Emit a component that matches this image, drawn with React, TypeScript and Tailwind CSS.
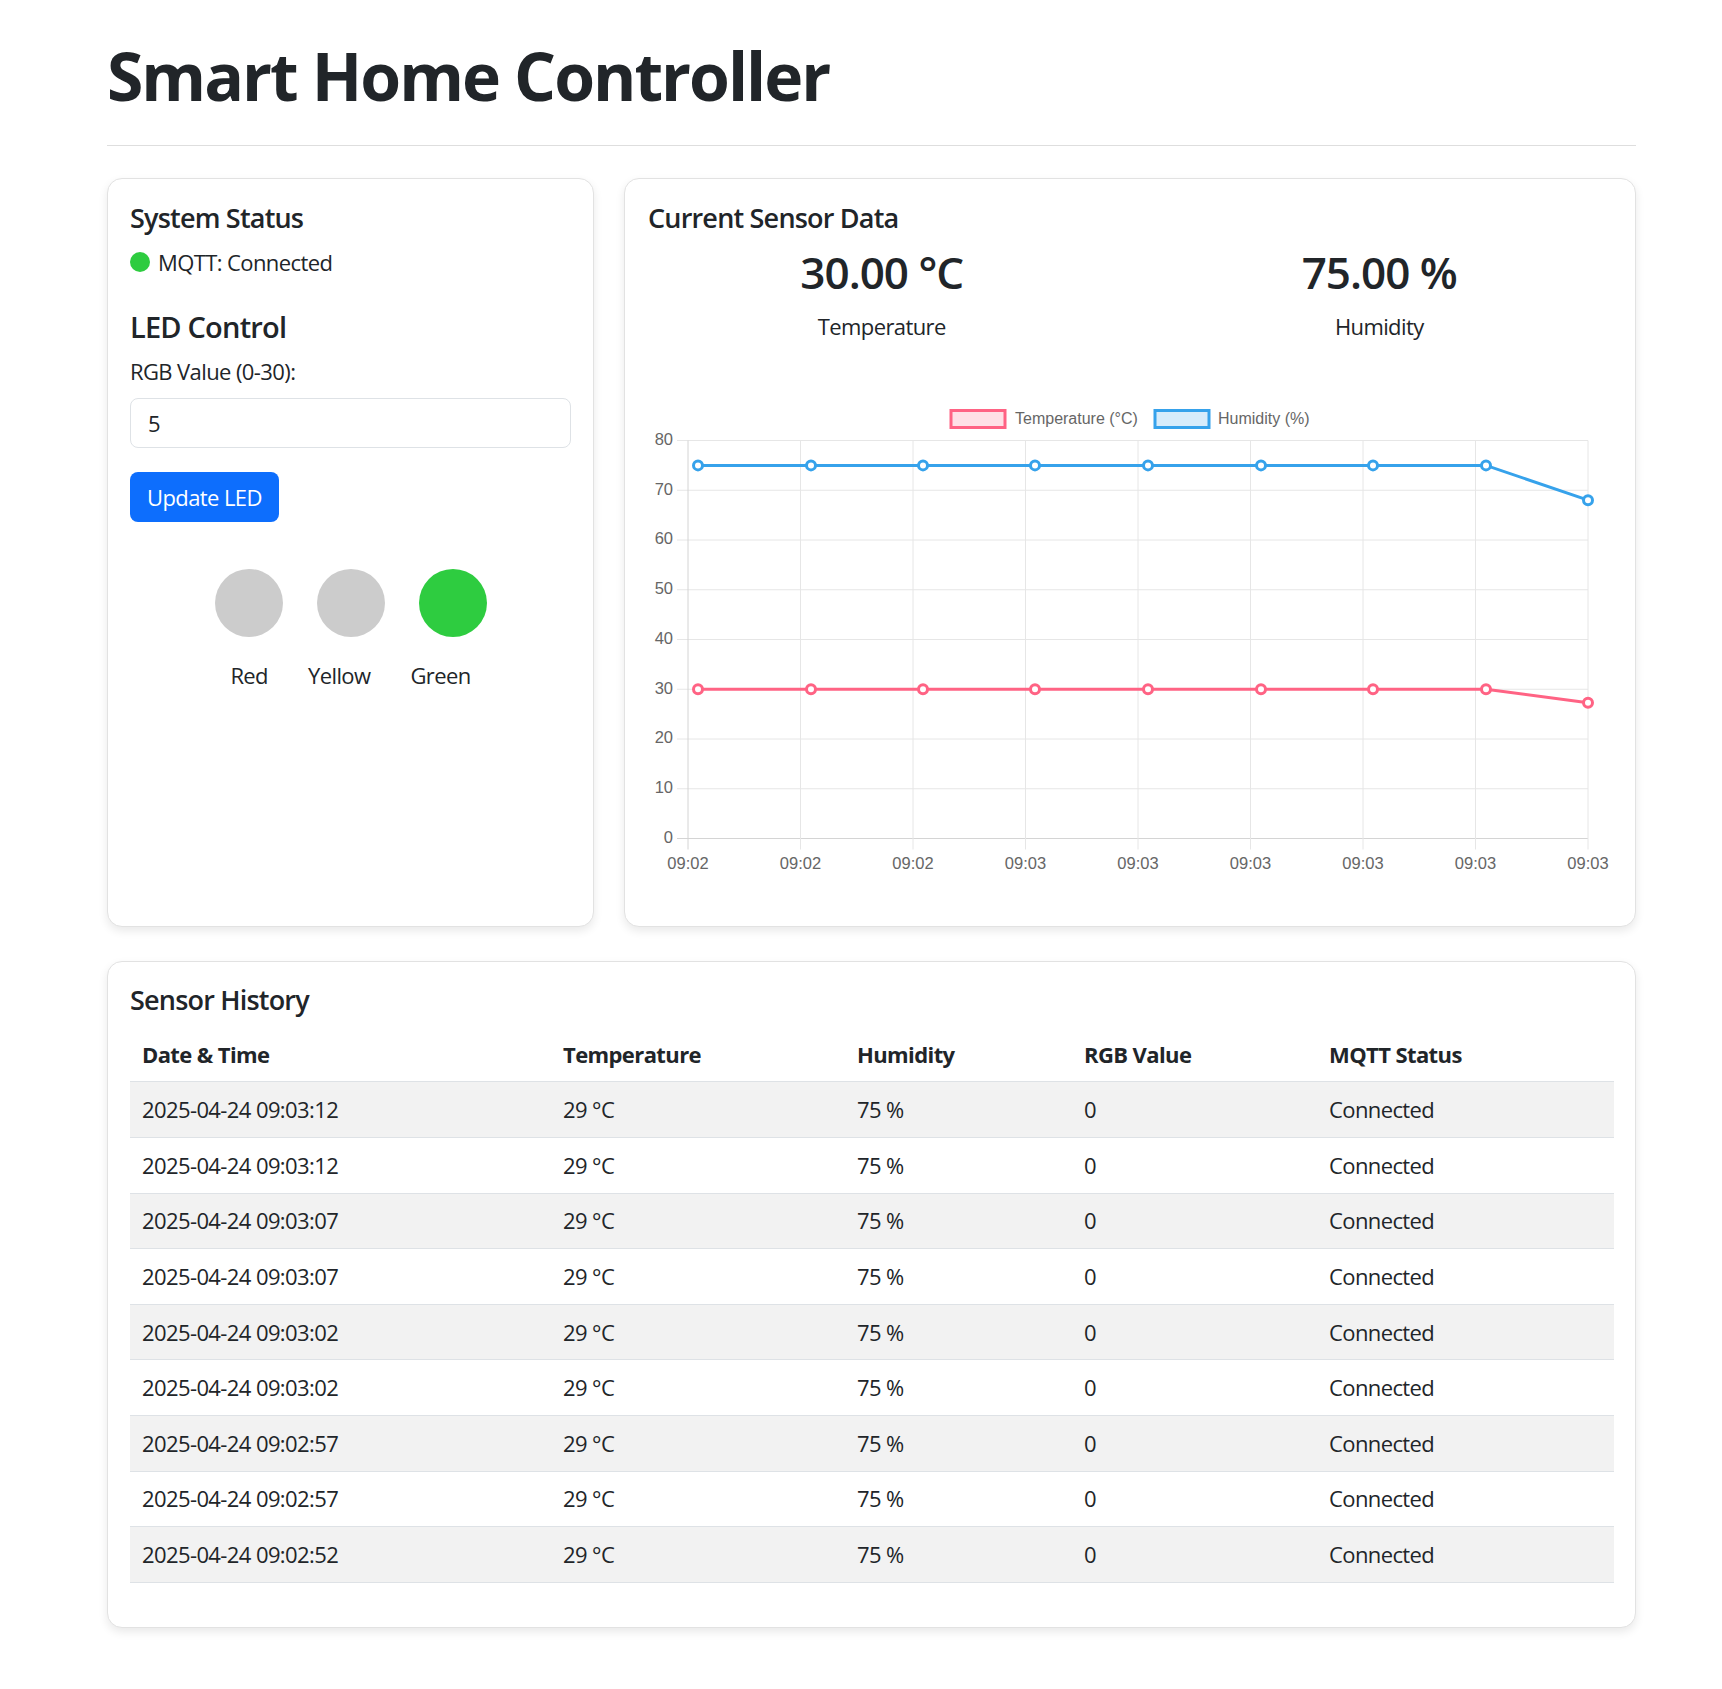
import React from "react";

const gridX = [688, 800.5, 913, 1025.5, 1138, 1250.5, 1363, 1475.5, 1588];
const pointX = [698, 811, 923, 1035, 1148, 1261, 1373, 1486, 1588];
const xLabels = ["09:02", "09:02", "09:02", "09:03", "09:03", "09:03", "09:03", "09:03", "09:03"];
const humidity = [75, 75, 75, 75, 75, 75, 75, 75, 68];
const temperature = [30, 30, 30, 30, 30, 30, 30, 30, 27.3];
const yTicks = [0, 10, 20, 30, 40, 50, 60, 70, 80];
const yOf = (v: number) => 838 - v * 4.975;

const history = [
  "2025-04-24 09:03:12",
  "2025-04-24 09:03:12",
  "2025-04-24 09:03:07",
  "2025-04-24 09:03:07",
  "2025-04-24 09:03:02",
  "2025-04-24 09:03:02",
  "2025-04-24 09:02:57",
  "2025-04-24 09:02:57",
  "2025-04-24 09:02:52",
];

function SensorChart() {
  const series = [
    { data: humidity, color: "#36a2eb" },
    { data: temperature, color: "#ff6384" },
  ];
  return (
    <svg width="964" height="544" className="block tracking-normal">
      <g transform="translate(-648 -359.5)" fontFamily="'Liberation Sans', Arial, sans-serif" fontSize="16.5" fill="#666">
        {/* legend */}
        <rect x="951" y="410" width="54" height="17" fill="rgba(255,99,132,0.2)" stroke="#ff6384" strokeWidth="3" />
        <text x="1015" y="419" fontSize="16" dominantBaseline="middle">Temperature (°C)</text>
        <rect x="1155" y="410" width="54" height="17" fill="rgba(54,162,235,0.2)" stroke="#36a2eb" strokeWidth="3" />
        <text x="1218" y="419" fontSize="16" dominantBaseline="middle">Humidity (%)</text>

        {/* grid */}
        {yTicks.map((v) => (
          <g key={v}>
            <line x1="677" x2="1588" y1={yOf(v)} y2={yOf(v)} stroke={v === 0 ? "#d4d4d4" : "#e6e6e6"} strokeWidth="1" />
            <text x="673" y={yOf(v)} textAnchor="end" dominantBaseline="middle">{v}</text>
          </g>
        ))}
        {gridX.map((x, i) => (
          <g key={i}>
            <line x1={x} x2={x} y1="440" y2="849" stroke={i === 0 ? "#d4d4d4" : "#e6e6e6"} strokeWidth="1" />
            <text x={x} y="864" textAnchor="middle" dominantBaseline="middle">{xLabels[i]}</text>
          </g>
        ))}

        {/* data */}
        {series.map((s, si) => (
          <g key={si}>
            <polyline
              points={s.data.map((v, i) => `${pointX[i]},${yOf(v)}`).join(" ")}
              fill="none"
              stroke={s.color}
              strokeWidth="3"
            />
            {s.data.map((v, i) => (
              <circle key={i} cx={pointX[i]} cy={yOf(v)} r="4.5" fill="#fff" stroke={s.color} strokeWidth="3" />
            ))}
          </g>
        ))}
      </g>
    </svg>
  );
}

export default function App() {
  return (
    <div className="min-h-[1689px] bg-white pl-[107px] pt-[36px] font-['Open_Sans',sans-serif] text-[22px] leading-[33px] tracking-[-0.6px] text-[#212529]">
      <div className="w-[1529px]">
        <h1 className="text-[66px] font-bold leading-[1.2] tracking-[-2px]">Smart Home Controller</h1>
        <hr className="mt-[30px] border-t border-[#dedede]" />

        <div className="mt-[32px] flex gap-[30px]">
          {/* left card */}
          <div className="w-[487px] rounded-[15px] border border-[#e2e2e2] bg-white px-[22px] pb-[22px] pt-[23px] shadow-[0_4px_10px_rgba(0,0,0,0.09)]">
            <h5 className="mb-[11px] text-[27px] font-semibold leading-[1.2] tracking-[-0.8px]">System Status</h5>
            <div className="flex items-center">
              <span className="mr-[8px] h-[20px] w-[20px] rounded-full bg-[#2ecc40]" />
              <span>MQTT: Connected</span>
            </div>
            <h4 className="mt-[31px] text-[29px] font-semibold leading-[1.2] tracking-[-0.8px]">LED Control</h4>
            <div className="mt-[11px]">RGB Value (0-30):</div>
            <div className="mt-[10px] flex h-[50px] items-center rounded-[8px] border border-[#dee2e6] px-[17px]">5</div>
            <button className="mt-[24px] h-[50px] rounded-[8px] bg-[#0d6efd] px-[17px] text-white">Update LED</button>
            <div className="mt-[47px] flex justify-center gap-[34px]">
              <div className="h-[68px] w-[68px] rounded-full bg-[#cccccc]" />
              <div className="h-[68px] w-[68px] rounded-full bg-[#cccccc]" />
              <div className="h-[68px] w-[68px] rounded-full bg-[#2ecc40]" />
            </div>
            <div className="mt-[22px] flex justify-center gap-[40px]">
              <span>Red</span>
              <span>Yellow</span>
              <span>Green</span>
            </div>
          </div>

          {/* right card */}
          <div className="w-[1012px] rounded-[15px] border border-[#e2e2e2] bg-white pb-[22px] pl-[23px] pr-[22px] pt-[23px] shadow-[0_4px_10px_rgba(0,0,0,0.09)]">
            <h5 className="mb-[11px] text-[27px] font-semibold leading-[1.2] tracking-[-0.8px]">Current Sensor Data</h5>
            <div className="-mx-[15px] flex">
              <div className="flex-1 text-center">
                <div className="text-[44px] font-semibold leading-[1.2] tracking-[-1px]">30.00 °C</div>
                <div className="mt-[12px]">Temperature</div>
              </div>
              <div className="flex-1 text-center">
                <div className="text-[44px] font-semibold leading-[1.2] tracking-[-1px]">75.00 %</div>
                <div className="mt-[12px]">Humidity</div>
              </div>
            </div>
            <div className="mt-[17px]">
              <SensorChart />
            </div>
          </div>
        </div>

        {/* history */}
        <div className="mt-[34px] rounded-[15px] border border-[#e2e2e2] bg-white px-[22px] pb-[44px] pt-[22px] shadow-[0_4px_10px_rgba(0,0,0,0.09)]">
          <h5 className="mb-[10px] text-[27px] font-semibold leading-[1.2] tracking-[-0.8px]">Sensor History</h5>
          <table className="w-[1484px] border-collapse text-left">
            <thead>
              <tr className="border-b border-[#dee2e6]">
                <th className="w-[421px] px-[12px] py-[10.8px] font-bold">Date &amp; Time</th>
                <th className="w-[294px] px-[12px] py-[10.8px] font-bold">Temperature</th>
                <th className="w-[227px] px-[12px] py-[10.8px] font-bold">Humidity</th>
                <th className="w-[245px] px-[12px] py-[10.8px] font-bold">RGB Value</th>
                <th className="px-[12px] py-[10.8px] font-bold">MQTT Status</th>
              </tr>
            </thead>
            <tbody>
              {history.map((t, i) => (
                <tr key={i} className={`border-b border-[#dee2e6] ${i % 2 === 0 ? "bg-[#f2f2f2]" : "bg-white"}`}>
                  <td className="px-[12px] py-[10.8px]">{t}</td>
                  <td className="px-[12px] py-[10.8px]">29 °C</td>
                  <td className="px-[12px] py-[10.8px]">75 %</td>
                  <td className="px-[12px] py-[10.8px]">0</td>
                  <td className="px-[12px] py-[10.8px]">Connected</td>
                </tr>
              ))}
            </tbody>
          </table>
        </div>
      </div>
    </div>
  );
}
